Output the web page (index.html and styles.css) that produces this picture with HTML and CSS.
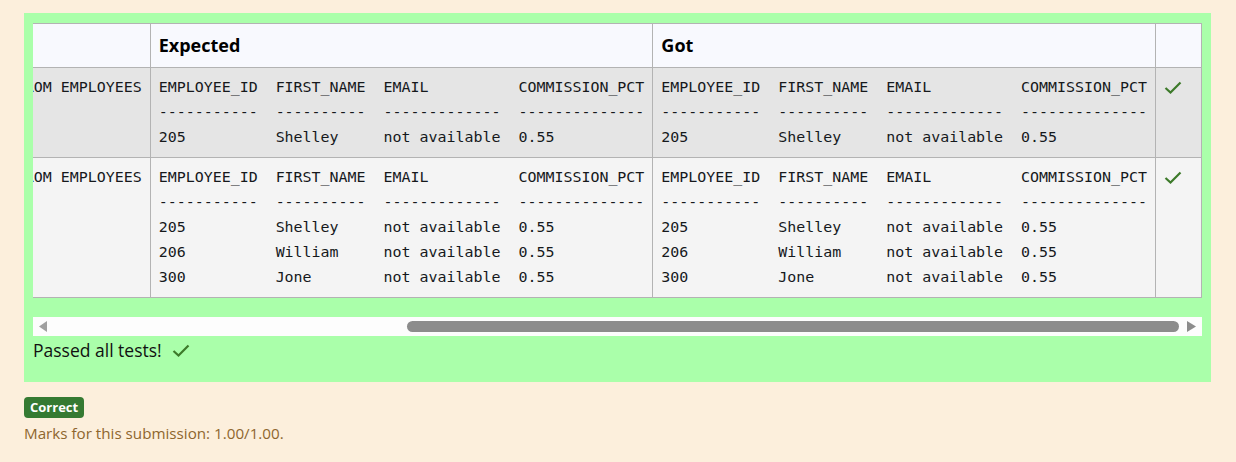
FILE: index.html
```html
<!DOCTYPE html>
<html>
<head>
<meta charset="utf-8">
<link rel="stylesheet" href="styles.css">
</head>
<body>
<div class="outcome">
  <div class="results">
    <div class="scroller">
      <table class="tests">
        <thead>
          <tr>
            <th class="code"></th>
            <th>Expected</th>
            <th>Got</th>
            <th class="mark"></th>
          </tr>
        </thead>
        <tbody>
          <tr class="r0">
            <td class="code">SELECT EMPLOYEE_ID, FIRST_NAME, EMAIL, COMMISSION_PCT FROM EMPLOYEES</td>
            <td>EMPLOYEE_ID  FIRST_NAME  EMAIL          COMMISSION_PCT
-----------  ----------  -------------  --------------
205          Shelley     not available  0.55</td>
            <td>EMPLOYEE_ID  FIRST_NAME  EMAIL          COMMISSION_PCT
-----------  ----------  -------------  --------------
205          Shelley     not available  0.55</td>
            <td class="mark"><svg class="tick" viewBox="0 0 18 13" width="18" height="13"><polyline points="1.5,7 6.5,11.5 16.5,1.5" fill="none" stroke="#3d7a2a" stroke-width="2.2"/></svg></td>
          </tr>
          <tr class="r1">
            <td class="code">SELECT EMPLOYEE_ID, FIRST_NAME, EMAIL, COMMISSION_PCT FROM EMPLOYEES</td>
            <td>EMPLOYEE_ID  FIRST_NAME  EMAIL          COMMISSION_PCT
-----------  ----------  -------------  --------------
205          Shelley     not available  0.55
206          William     not available  0.55
300          Jone        not available  0.55</td>
            <td>EMPLOYEE_ID  FIRST_NAME  EMAIL          COMMISSION_PCT
-----------  ----------  -------------  --------------
205          Shelley     not available  0.55
206          William     not available  0.55
300          Jone        not available  0.55</td>
            <td class="mark"><svg class="tick" viewBox="0 0 18 13" width="18" height="13"><polyline points="1.5,7 6.5,11.5 16.5,1.5" fill="none" stroke="#3d7a2a" stroke-width="2.2"/></svg></td>
          </tr>
        </tbody>
      </table>
    </div>
    <div class="scrollbar">
      <svg class="arrow left" viewBox="0 0 10 11" width="10" height="11"><polygon points="10,0 10,11 2,5.5" fill="#a0a0a0"/></svg>
      <div class="track"><div class="thumb"></div></div>
      <svg class="arrow right" viewBox="0 0 10 11" width="10" height="11"><polygon points="0,0 0,11 9,5.5" fill="#8c8c8c"/></svg>
    </div>
    <p class="passed">Passed all tests! <svg class="tick" viewBox="0 0 18 13" width="18" height="13"><polyline points="1.5,7 6.5,11.5 16.5,1.5" fill="none" stroke="#3d7a2a" stroke-width="2.2"/></svg></p>
  </div>
  <div class="grade">
    <span class="badge">Correct</span>
  </div>
  <div class="marks">Marks for this submission: 1.00/1.00.</div>
</div>
</body>
</html>
```
FILE: styles.css
```css
html, body {
  margin: 0;
  background: #fcefdc;
}
body {
  padding: 13px 25px 0 24px;
  font-family: "Open Sans", "Noto Sans", sans-serif;
  color: #1d2125;
}
.results {
  background: #aaffaa;
  padding: 10px 9px 1px 9px;
}
.scroller {
  overflow: hidden;
  direction: rtl;
  padding-bottom: 19px;
}
.tests {
  direction: ltr;
  border-collapse: collapse;
  font-family: "DejaVu Sans Mono", monospace;
  font-size: 14.94px;
  color: #16191c;
}
.tests th {
  background: #f8f9fe;
  font-family: "Open Sans", "Noto Sans", sans-serif;
  font-size: 18px;
  font-weight: 700;
  line-height: 27px;
  padding: 8px 8px;
  text-align: left;
  border: 1px solid #b3b3b3;
  color: #000;
}
.tests td {
  white-space: pre;
  line-height: 25px;
  padding: 7px 8px;
  vertical-align: top;
  border: 1px solid #b3b3b3;
}
.tests tr.r0 td { background: #e5e5e5; }
.tests tr.r1 td { background: #f4f4f4; }
.tests .mark { width: 29px; min-width: 29px; box-sizing: content-box; }
.tests td.mark .tick { display: block; margin-top: 6px; margin-left: 0; }
.scrollbar {
  display: flex;
  align-items: center;
  height: 19px;
  background: #fdfdfd;
  padding: 0 5px 0 4px;
}
.arrow { display: block; flex: none; }
.track {
  flex: 1;
  display: flex;
  justify-content: flex-end;
  padding-right: 8px;
}
.thumb {
  width: 772px;
  height: 11px;
  border-radius: 6px;
  background: #8c8c8c;
}
.passed {
  margin: 2px 0 18px 0;
  font-size: 17.5px;
  line-height: 25px;
  color: #111;
}
.passed .tick { margin-left: 6px; vertical-align: 0; }
.grade { margin-top: 15px; display: flex; }
.badge {
  display: block;
  background: #357a32;
  color: #fff;
  font-weight: 700;
  font-size: 13px;
  line-height: 17px;
  padding: 2px 6px;
  border-radius: 4px;
}
.marks {
  margin-top: 5px;
  font-size: 15.2px;
  line-height: 20px;
  color: #8e662e;
}
```
